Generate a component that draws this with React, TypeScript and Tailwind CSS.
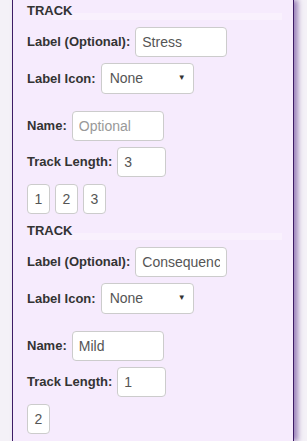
import React from 'react'

interface Track {
  label: string
  name: string
  length: number
  boxes: number[]
}

const tracks: Track[] = [
  { label: 'Stress', name: '', length: 3, boxes: [1, 2, 3] },
  { label: 'Consequences', name: 'Mild', length: 1, boxes: [2] },
]

const font = { fontFamily: '"Liberation Sans", Arial, sans-serif' }

function Field({ label, children, className = '' }: { label: string; children: React.ReactNode; className?: string }) {
  return (
    <div className={`flex items-center gap-[5px] ${className}`}>
      <span className="text-[13px] leading-[16px] font-bold text-[#333]">{label}</span>
      {children}
    </div>
  )
}

const inputCls =
  'h-[30px] rounded-[4px] border border-[#ccc] bg-white px-[6px] text-[14px] text-[#555] placeholder:text-[#999] outline-none'

function TrackBlock({ track }: { track: Track }) {
  return (
    <div className="pb-[6px]">
      {/* heading */}
      <div className="relative h-[27px]">
        <div className="absolute left-[25px] right-[11px] top-[13px] h-[7px] bg-white/30" />
        <span className="relative block text-[13px] leading-[21px] font-bold text-[#333]">TRACK</span>
      </div>

      <Field label="Label (Optional):">
        <input className={`${inputCls} w-[92px]`} defaultValue={track.label} />
      </Field>

      <Field label="Label Icon:" className="mt-[6px]">
        <div className="relative flex h-[31px] w-[93px] items-center rounded-[4px] border border-[#ccc] bg-white pl-[8px] text-[14px] text-[#555]">
          None
          <span className="absolute right-[7px] top-[8px] text-[8px] text-[#333]">▼</span>
        </div>
      </Field>

      <Field label="Name:" className="mt-[17px]">
        <input className={`${inputCls} w-[92px]`} defaultValue={track.name} placeholder="Optional" />
      </Field>

      <Field label="Track Length:" className="mt-[6px]">
        <input className={`${inputCls} w-[49px]`} defaultValue={String(track.length)} />
      </Field>

      <div className="mt-[7px] flex gap-[5px]">
        {track.boxes.map((b) => (
          <div
            key={b}
            className="flex h-[30px] w-[23px] items-center justify-center rounded-[4px] border border-[#ccc] bg-white text-[14px] text-[#555]"
          >
            {b}
          </div>
        ))}
      </div>
    </div>
  )
}

export default function App() {
  return (
    <div className="h-[441px] w-[307px] overflow-hidden bg-[#f4f1f7] pl-[12px]" style={font}>
      <div className="h-full w-[282px] border-x border-[#3d1c66] bg-[#f6ebfd] pl-[14px] shadow-[4px_0_5px_rgba(90,50,140,0.55)]">
        {tracks.map((t, i) => (
          <TrackBlock key={i} track={t} />
        ))}
      </div>
    </div>
  )
}
